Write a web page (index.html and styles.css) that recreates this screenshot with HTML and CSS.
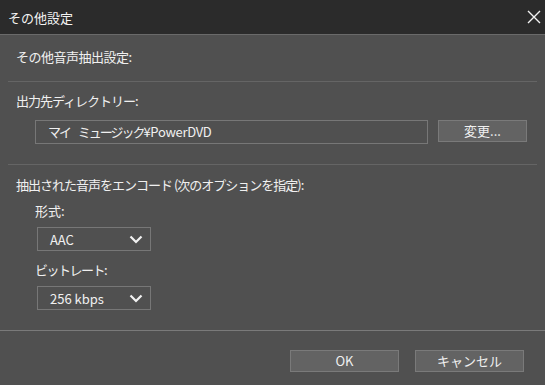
FILE: index.html
```html
<!DOCTYPE html>
<html lang="ja">
<head>
    <meta charset="UTF-8">
    <title>その他設定</title>
    <link rel="stylesheet" href="styles.css">
</head>
<body>
    <div class="dialog">
        <div class="titlebar">
            <span class="title">その他設定</span>
            <svg class="close" width="14" height="14" viewBox="0 0 14 14">
                <path d="M1 1 L13 13 M13 1 L1 13" stroke="#f2f2f2" stroke-width="1.4" fill="none"/>
            </svg>
        </div>

        <div class="content">
            <div class="label section-title">その他音声抽出設定:</div>
            <div class="sep"></div>

            <div class="label dir-label">出力先ディレクトリー:</div>
            <div class="dir-row">
                <div class="path-box"><span class="kana my">マイ</span> <span class="kana">ミュージック</span>¥PowerDVD</div>
                <div class="btn change-btn">変更...</div>
            </div>
            <div class="sep sep-2"></div>

            <div class="label encode-label">抽出された音声をエンコード (次のオプションを指定):</div>
            <div class="options">
                <div class="label sub-label">形式:</div>
                <div class="select">
                    <span>AAC</span>
                    <svg class="chevron" width="14" height="9" viewBox="0 0 14 9">
                        <path d="M1.5 1.5 L7 7 L12.5 1.5" stroke="#f2f2f2" stroke-width="2.2" fill="none"/>
                    </svg>
                </div>
                <div class="label sub-label bitrate-label">ビットレート:</div>
                <div class="select">
                    <span>256 kbps</span>
                    <svg class="chevron" width="14" height="9" viewBox="0 0 14 9">
                        <path d="M1.5 1.5 L7 7 L12.5 1.5" stroke="#f2f2f2" stroke-width="2.2" fill="none"/>
                    </svg>
                </div>
            </div>
        </div>

        <div class="footer">
            <div class="btn footer-btn">OK</div>
            <div class="btn footer-btn">キャンセル</div>
        </div>
    </div>
</body>
</html>
```

FILE: styles.css
```css
body {
    margin: 0;
    padding: 0;
    background: #505050;
    font-family: "Noto Sans CJK JP", "Noto Sans", sans-serif;
    font-size: 13px;
    color: #f0f0f0;
}

.dialog {
    width: 545px;
    height: 385px;
    background: #505050;
}

.titlebar {
    height: 34px;
    background: #2b2b2b;
    border-bottom: 1px solid #6a6a6a;
    display: flex;
    align-items: center;
    justify-content: space-between;
    padding: 0 4px 0 8px;
}

.title {
    font-size: 13px;
    color: #f4f4f4;
}

.content {
    padding: 0 8px;
}

.label {
    line-height: 18px;
    height: 18px;
    padding-left: 8px;
    white-space: nowrap;
}

.section-title {
    margin-top: 13px;
    letter-spacing: -0.5px;
}

.sep {
    height: 1px;
    background: #656565;
    margin-top: 15px;
}

.dir-label {
    margin-top: 10px;
    letter-spacing: -1px;
}

.dir-row {
    display: flex;
    align-items: flex-start;
    margin-top: 10px;
    padding-left: 27px;
}

.path-box {
    width: 379px;
    height: 22px;
    line-height: 22px;
    border: 1px solid #777777;
    padding-left: 12px;
    white-space: nowrap;
    letter-spacing: -0.3px;
}

.path-box .kana {
    letter-spacing: -2px;
}

.path-box .my {
    margin-right: 5px;
}

.btn {
    background: #636363;
    border: 1px solid #7a7a7a;
    text-align: center;
    box-sizing: border-box;
    height: 22px;
    line-height: 20px;
}

.change-btn {
    width: 89px;
    margin-left: 10px;
}

.sep-2 {
    margin-top: 20px;
}

.encode-label {
    margin-top: 11px;
    letter-spacing: -1px;
}

.options {
    padding-left: 19px;
}

.sub-label {
    margin-top: 8px;
}

.bitrate-label {
    margin-top: 10px;
    letter-spacing: -1.5px;
}

.select {
    width: 114px;
    height: 24px;
    box-sizing: border-box;
    border: 1px solid #777777;
    margin-top: 7px;
    margin-left: 10px;
    display: flex;
    align-items: center;
    justify-content: space-between;
    padding: 0 7px 0 12px;
}

.footer {
    border-top: 1px solid #7a7a7a;
    margin-top: 20px;
    display: flex;
    justify-content: flex-end;
    gap: 16px;
    padding: 19px 21px 0 0;
}

.footer-btn {
    width: 109px;
}
```
